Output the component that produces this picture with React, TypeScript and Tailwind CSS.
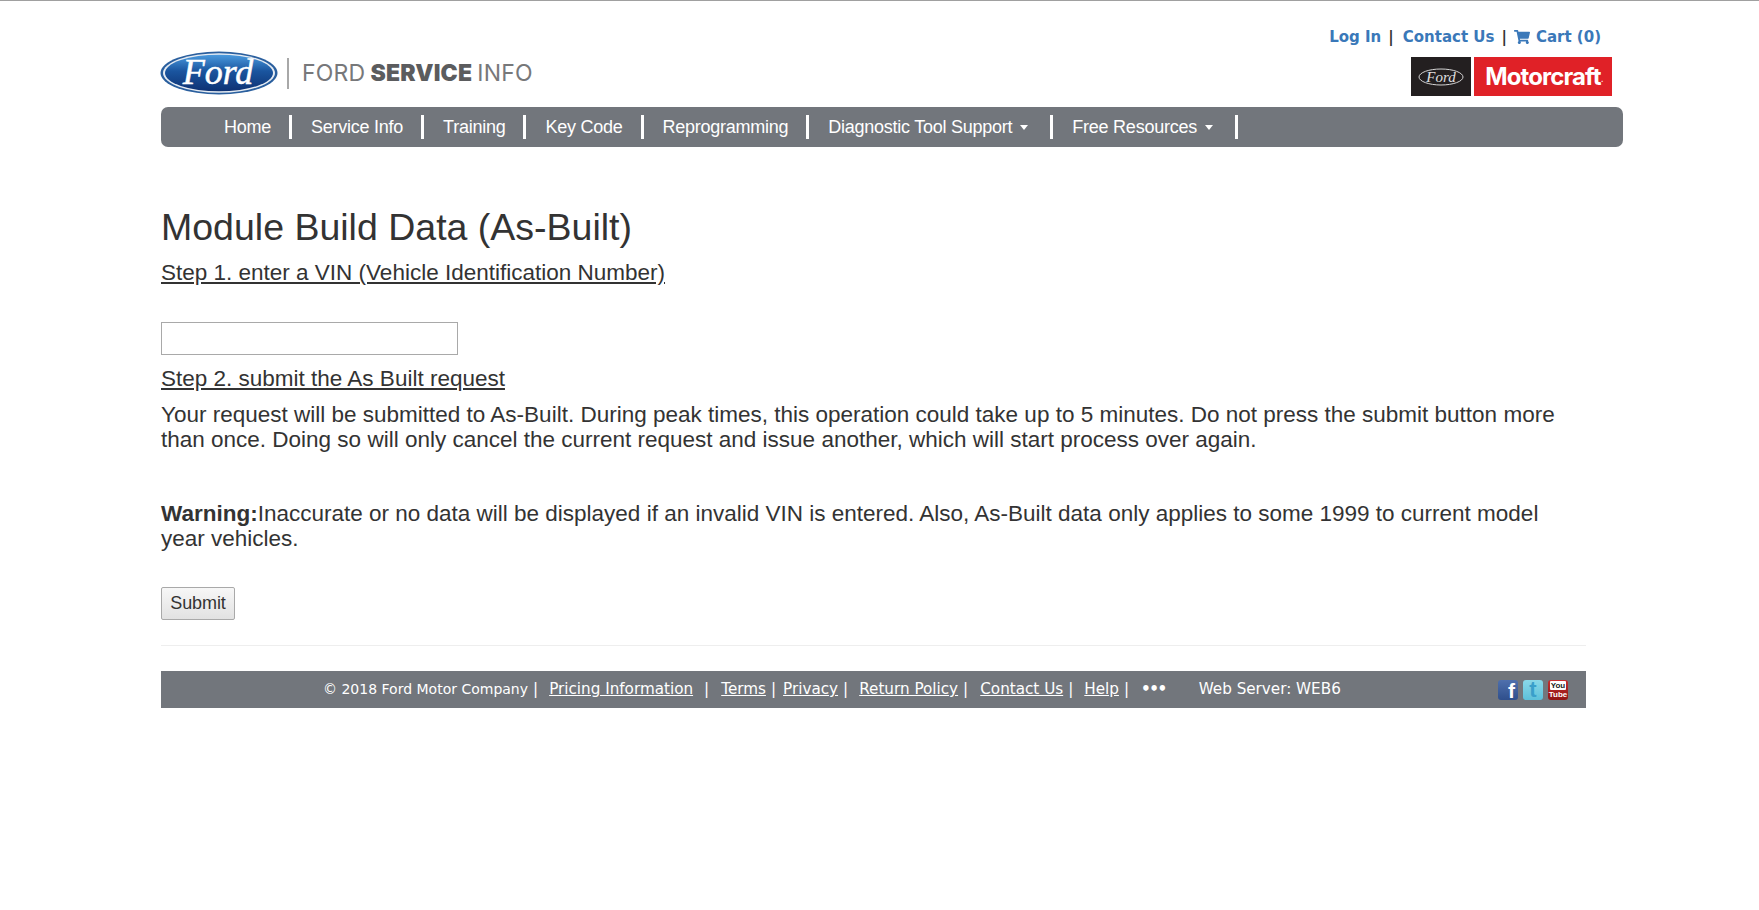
import React from 'react'
import { FaShoppingCart } from 'react-icons/fa'

const navItems = [
  { label: 'Home' },
  { label: 'Service Info' },
  { label: 'Training' },
  { label: 'Key Code' },
  { label: 'Reprogramming' },
  { label: 'Diagnostic Tool Support', caret: true },
  { label: 'Free Resources', caret: true },
]

function FordLogo() {
  return (
    <svg width="118" height="44" viewBox="0 0 118 44" className="block">
      <defs>
        <linearGradient id="fordBlue" x1="0" y1="0" x2="0" y2="1">
          <stop offset="0" stopColor="#4a9ade" />
          <stop offset="0.45" stopColor="#1a559f" />
          <stop offset="1" stopColor="#0e3273" />
        </linearGradient>
      </defs>
      <ellipse cx="59" cy="22" rx="58.5" ry="21.5" fill="#2a5f9e" />
      <ellipse cx="59" cy="22" rx="56" ry="19.8" fill="#e6ecf3" />
      <ellipse cx="59" cy="22" rx="54" ry="18.3" fill="url(#fordBlue)" />
      <text
        x="58"
        y="33"
        textAnchor="middle"
        fill="#ffffff"
        stroke="#ffffff"
        strokeWidth="0.5"
        fontFamily="'Liberation Serif', serif"
        fontStyle="italic"
        fontSize="36"
      >
        Ford
      </text>
    </svg>
  )
}

function MotorcraftLogo() {
  return (
    <div className="flex gap-[3px] h-[39px]">
      <div className="w-[60px] bg-[#231f20] flex items-center justify-center">
        <svg width="46" height="18" viewBox="0 0 46 18">
          <ellipse cx="23" cy="9" rx="22" ry="8" fill="none" stroke="#d5d5d5" strokeWidth="1" />
          <text
            x="23"
            y="13.5"
            textAnchor="middle"
            fill="#e0e0e0"
            fontFamily="'Liberation Serif', serif"
            fontStyle="italic"
            fontSize="15"
          >
            Ford
          </text>
        </svg>
      </div>
      <div className="w-[138px] bg-[#e02127] flex items-center justify-center pl-[2px] pt-[1px] text-white font-bold text-[24px] tracking-[-0.9px] font-['Inter',sans-serif]">
        Motorcraft<span className="text-[10px] self-end mb-[10px] font-normal">.</span>
      </div>
    </div>
  )
}

function Social() {
  return (
    <div className="flex items-center gap-[5px] font-['Liberation_Sans',sans-serif]">
      <div className="w-5 h-5 rounded-[3px] bg-gradient-to-b from-[#4f70ad] to-[#2f4f8c] flex items-end justify-end pr-[3px] text-white font-bold text-[21px] leading-[19px]">
        f
      </div>
      <div className="w-5 h-5 rounded-[3px] bg-gradient-to-b from-[#8ad8e8] to-[#5cc0da] flex items-end justify-center text-[#3a9fca] font-bold text-[22px] leading-[20px]">
        t
      </div>
      <div className="w-5 h-5 rounded-[3px] bg-gradient-to-b from-[#c62f2f] to-[#8f1414] flex flex-col items-center text-[8px] leading-[9px] font-bold pt-[1px]">
        <span className="bg-white text-[#222] px-[1px] rounded-[1px]">You</span>
        <span className="text-white">Tube</span>
      </div>
    </div>
  )
}

export default function App() {
  return (
    <div className="min-h-[910px] bg-white border-t-[1px] border-[#a0a0a0] font-['Liberation_Sans',Arial,sans-serif] text-[#333333]">
      <div className="w-[1462px] ml-[161px]">
        {/* Header */}
        <div className="flex justify-between h-[106px]">
          <div className="flex items-center pt-[50px] h-[94px]">
            <div className="-ml-[1px]">
              <FordLogo />
            </div>
            <div className="w-[2px] h-[31px] bg-[#a8a8a8] ml-[9px] mr-[13px]"></div>
            <div className="flex gap-[5px] text-[23px] text-[#77787a] font-['Inter',sans-serif] whitespace-nowrap tracking-[0.2px]">
              <span>FORD</span>
              <span className="font-black text-[#5b5c5e]">SERVICE</span>
              <span>INFO</span>
            </div>
          </div>
          <div className="flex flex-col items-end pr-[11px]">
            <div className="flex items-center h-[20px] mt-[26px] pr-[11px] text-[15px] font-bold font-['DejaVu_Sans',Verdana,sans-serif] text-[#3a78b9] whitespace-nowrap">
              <a>Log In</a>
              <span className="text-[#333] ml-[7px] mr-[9px]">|</span>
              <a>Contact Us</a>
              <span className="text-[#333] ml-[7px] mr-[7px]">|</span>
              <FaShoppingCart className="w-[16px] h-[16px] mr-[6px]" />
              <a>Cart (0)</a>
            </div>
            <div className="mt-[10px]">
              <MotorcraftLogo />
            </div>
          </div>
        </div>

        {/* Nav */}
        <nav className="h-10 bg-[#72767c] rounded-[7px] flex items-center pl-[63px] text-white text-[18px] tracking-[-0.25px]">
          {navItems.map((item) => (
            <div key={item.label} className={item.caret ? 'flex items-center h-6 pr-[22px] mr-[19px] border-r-[3px] border-white whitespace-nowrap' : 'flex items-center h-6 pr-[18px] mr-[19px] border-r-[3px] border-white whitespace-nowrap'}>
              <span>{item.label}</span>
              {item.caret && <span className="ml-2 w-0 h-0 border-l-[4px] border-r-[4px] border-t-[5px] border-l-transparent border-r-transparent border-t-white"></span>}
            </div>
          ))}
        </nav>

        {/* Content */}
        <div className="w-[1425px]">
          <h1 className="text-[37.5px] leading-[40px] mt-[60px]">Module Build Data (As-Built)</h1>
          <p className="text-[22.5px] leading-[28px] underline mt-[12px]">Step 1. enter a VIN (Vehicle Identification Number)</p>
          <input className="block w-[297px] h-[33px] border border-[#a9a9a9] mt-[35px] bg-white" />
          <p className="text-[22.5px] leading-[28px] underline mt-[10px]">Step 2. submit the As Built request</p>
          <p className="text-[22.5px] leading-[25px] mt-[9px]">
            Your request will be submitted to As-Built. During peak times, this operation could take up to 5 minutes. Do not press the submit button more than once. Doing so will only cancel the current request and issue another, which will start process over again.
          </p>
          <p className="text-[22.5px] leading-[25px] mt-[49px]">
            <strong>Warning:</strong>Inaccurate or no data will be displayed if an invalid VIN is entered. Also, As-Built data only applies to some 1999 to current model year vehicles.
          </p>
          <button className="block mt-[36px] w-[74px] h-[33px] border border-[#a9a9a9] rounded-[2px] bg-gradient-to-b from-[#f7f7f7] to-[#e2e2e2] text-[18px] tracking-[-0.1px] text-[#333]">
            Submit
          </button>
          <div className="mt-[25px] border-t border-[#eeeeee]"></div>

          {/* Footer */}
          <footer className="mt-[25px] h-[37px] bg-[#72767c] flex items-center text-white text-[15.2px] font-['DejaVu_Sans',Verdana,sans-serif] whitespace-nowrap">
            <div className="ml-[162px] flex items-center">
              <span className="text-[14px]">© 2018 Ford Motor Company</span>
              <span className="ml-[5px] mr-[11px]">|</span>
              <a className="underline">Pricing Information</a>
              <span className="ml-[11px] mr-[12px]">|</span>
              <a className="underline">Terms</a>
              <span className="ml-[5px] mr-[7px]">|</span>
              <a className="underline">Privacy</a>
              <span className="ml-[5px] mr-[11px]">|</span>
              <a className="underline">Return Policy</a>
              <span className="ml-[5px] mr-[12px]">|</span>
              <a className="underline">Contact Us</a>
              <span className="ml-[5px] mr-[11px]">|</span>
              <a className="underline">Help</a>
              <span className="ml-[5px] mr-[12px]">|</span>
              <span className="font-bold tracking-[-1.5px]">•••</span>
              <span className="ml-[33px]">Web Server: WEB6</span>
            </div>
            <div className="ml-auto mr-[18px]">
              <Social />
            </div>
          </footer>
        </div>
      </div>
    </div>
  )
}
